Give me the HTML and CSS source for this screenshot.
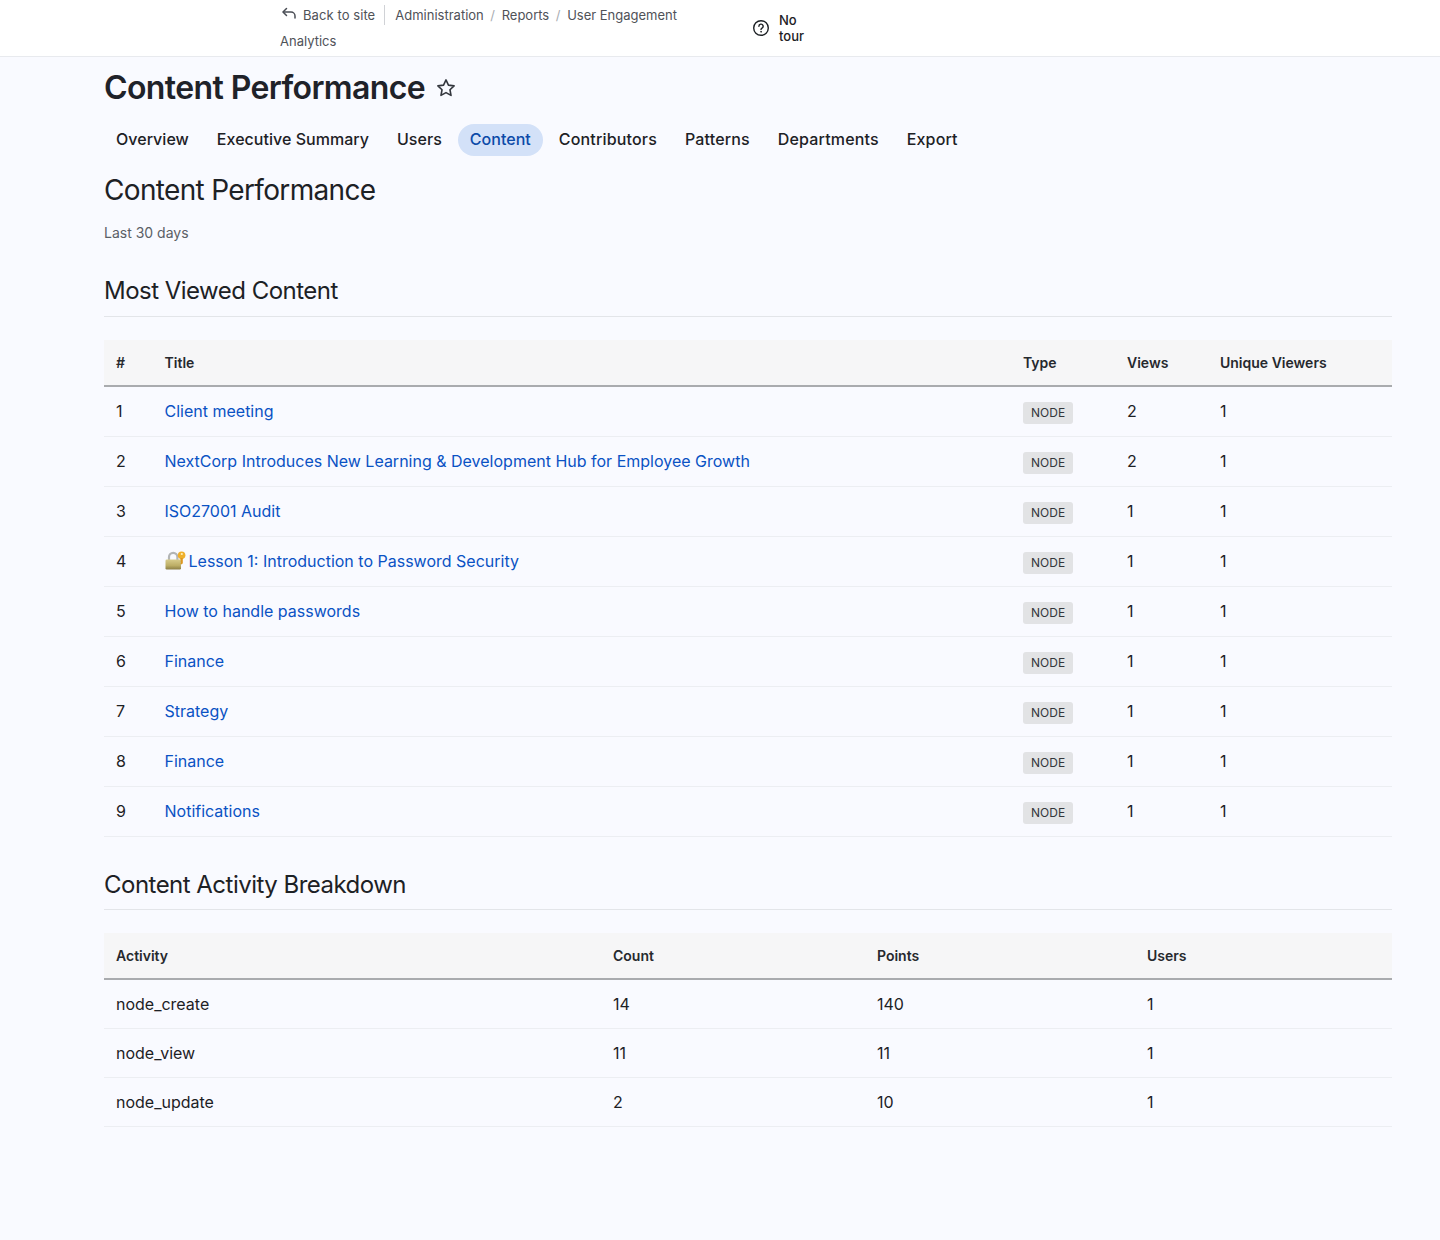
FILE: index.html
```html
<!DOCTYPE html>
<html lang="en">
<head>
<meta charset="utf-8">
<title>Content Performance</title>
<link rel="stylesheet" href="styles.css">
</head>
<body>
<header class="topbar">
  <nav class="crumbs">
    <div class="crumb-line">
      <a class="back"><svg class="back-icon" viewBox="0 0 16 16" width="16" height="16" fill="none" stroke="#4a4d55" stroke-width="1.5" stroke-linecap="round" stroke-linejoin="round"><path d="M5.5 2.5 2 6l3.5 3.5"/><path d="M2.5 6H10a4 4 0 0 1 4 4v2"/></svg>Back to site</a>
      <span class="divider"></span>
      <a>Administration</a><span class="sep">/</span><a>Reports</a><span class="sep">/</span><a>User Engagement</a>
    </div>
    <div class="crumb-line second"><a>Analytics</a></div>
  </nav>
  <div class="tour">
    <svg viewBox="0 0 18 18" width="18" height="18" fill="none" stroke="#1d2125" stroke-width="1.4" stroke-linecap="round"><circle cx="9" cy="9" r="7.3"/><path d="M6.9 7.2a2.1 2.1 0 1 1 3.1 1.9c-.7.4-1 .8-1 1.5"/><circle cx="9" cy="12.8" r=".4" fill="#1d2125" stroke-width=".8"/></svg>
    <span>No<br>tour</span>
  </div>
</header>
<main class="page">
  <div class="title-row">
    <h1>Content Performance</h1>
    <svg class="star" viewBox="0 0 20 20" width="20" height="20" fill="none" stroke="#33363d" stroke-width="1.6" stroke-linejoin="round"><path d="M10 1.9l2.45 5.2 5.65.75-4.13 3.9 1.05 5.6L10 14.6l-5.02 2.75 1.05-5.6L1.9 7.85l5.65-.75z"/></svg>
  </div>
  <nav class="tabs">
    <a>Overview</a><a>Executive Summary</a><a>Users</a><a class="active">Content</a><a>Contributors</a><a>Patterns</a><a>Departments</a><a>Export</a>
  </nav>
  <h2>Content Performance</h2>
  <p class="range">Last 30 days</p>
  <h3>Most Viewed Content</h3>
  <table class="viewed">
    <thead><tr><th class="c1">#</th><th class="c2">Title</th><th class="c3">Type</th><th class="c4">Views</th><th>Unique Viewers</th></tr></thead>
    <tbody>
      <tr><td>1</td><td><a>Client meeting</a></td><td><span class="badge">NODE</span></td><td>2</td><td>1</td></tr>
      <tr><td>2</td><td><a>NextCorp Introduces New Learning &amp; Development Hub for Employee Growth</a></td><td><span class="badge">NODE</span></td><td>2</td><td>1</td></tr>
      <tr><td>3</td><td><a>ISO27001 Audit</a></td><td><span class="badge">NODE</span></td><td>1</td><td>1</td></tr>
      <tr><td>4</td><td><a><svg class="emoji" viewBox="0 0 21 19" width="21" height="19"><defs><linearGradient id="lockbody" x1="0" y1="0" x2="0" y2="1"><stop offset="0" stop-color="#d8cc8c"/><stop offset="0.6" stop-color="#bdae66"/><stop offset="1" stop-color="#8c7f45"/></linearGradient></defs><path d="M4 9V6a4.2 4.2 0 0 1 8.4 0v3" fill="none" stroke="#b3b5b6" stroke-width="2.2"/><rect x="0.5" y="8.5" width="15.5" height="10" rx="1.2" fill="url(#lockbody)"/><circle cx="16.6" cy="4.2" r="3.8" fill="#efb02c"/><circle cx="16.8" cy="3" r="1.1" fill="#fff0bd"/><path d="M15.4 7h2.4v5.2l-1.2 1.4-1.2-1.1.7-.9-.7-.8.7-.8-.7-.7z" fill="#dc9720"/></svg>Lesson 1: Introduction to Password Security</a></td><td><span class="badge">NODE</span></td><td>1</td><td>1</td></tr>
      <tr><td>5</td><td><a>How to handle passwords</a></td><td><span class="badge">NODE</span></td><td>1</td><td>1</td></tr>
      <tr><td>6</td><td><a>Finance</a></td><td><span class="badge">NODE</span></td><td>1</td><td>1</td></tr>
      <tr><td>7</td><td><a>Strategy</a></td><td><span class="badge">NODE</span></td><td>1</td><td>1</td></tr>
      <tr><td>8</td><td><a>Finance</a></td><td><span class="badge">NODE</span></td><td>1</td><td>1</td></tr>
      <tr><td>9</td><td><a>Notifications</a></td><td><span class="badge">NODE</span></td><td>1</td><td>1</td></tr>
    </tbody>
  </table>
  <h3 class="second-heading">Content Activity Breakdown</h3>
  <table class="activity">
    <thead><tr><th class="a1">Activity</th><th class="a2">Count</th><th class="a3">Points</th><th>Users</th></tr></thead>
    <tbody>
      <tr><td>node_create</td><td>14</td><td>140</td><td>1</td></tr>
      <tr><td>node_view</td><td>11</td><td>11</td><td>1</td></tr>
      <tr><td>node_update</td><td>2</td><td>10</td><td>1</td></tr>
    </tbody>
  </table>
</main>
</body>
</html>
```
FILE: styles.css
```css
* { box-sizing: border-box; }
html, body { margin: 0; padding: 0; }
body {
  background: #f9faff;
  color: #1d2125;
  font-family: Inter, "Liberation Sans", sans-serif;
  font-size: 16px;
  min-height: 1240px;
}
a { color: inherit; text-decoration: none; }
.topbar {
  height: 57px;
  background: #fff;
  border-bottom: 1px solid #e8eaee;
  display: flex;
  padding-left: 280px;
}
.crumbs { width: 450px; font-size: 13px; color: #4f5258; }
.crumb-line { display: flex; align-items: center; height: 26px; margin-top: 2px; }
.crumb-line.second { margin-top: 0; }
.back { display: flex; align-items: center; gap: 6px; padding-left: 1px; padding-right: 9px; height: 20px; letter-spacing: 0.08px; }
.back-icon { margin-top: -3px; }
.divider { width: 1px; height: 20px; background: #d0d2d6; margin-right: 10px; }
.sep { color: #a9adb3; margin: 0 6.6px; }
.tour {
  margin-left: 22px;
  margin-top: 12px;
  display: flex;
  align-items: center;
  gap: 9px;
  height: 32px;
  font-size: 13px;
  font-weight: 500;
  line-height: 16px;
}
.page { padding: 0 48px 0 104px; }
.title-row { display: flex; align-items: center; gap: 11px; height: 60px; padding-top: 2px; }
h1 { margin: 0; font-size: 32px; font-weight: 600; letter-spacing: -0.6px; line-height: 58px; color: #1f2229; }
.star { margin-top: -1px; }
.tabs { display: flex; gap: 4px; margin-top: 7px; font-weight: 500; font-size: 16px; letter-spacing: 0.03px; }
.tabs a { height: 32px; line-height: 30px; padding: 0 12px; border-radius: 16px; }
.tabs a:nth-child(n+5) { letter-spacing: 0.16px; }
.tabs a.active { background: #d3e1f8; color: #0b4aa8; }
h2 { margin: 17px 0 0; font-size: 28px; font-weight: 400; letter-spacing: -0.66px; line-height: 34px; color: #1d2125; }
.range { margin: 16px 0 0; font-size: 14px; line-height: 20px; color: #5b5f66; }
h3 {
  margin: 31px 0 0;
  padding-bottom: 9px;
  font-size: 24px;
  font-weight: 400;
  letter-spacing: -0.52px;
  line-height: 33px;
  border-bottom: 1px solid #e3e5e9;
}
table { width: 1288px; border-collapse: collapse; table-layout: fixed; margin-top: 23px; }
th {
  background: #f6f6f7;
  font-size: 14px;
  font-weight: 600;
  text-align: left;
  height: 46px;
  padding: 0 12px;
  border-bottom: 2px solid #a9abae;
  color: #26292e;
}
td { height: 50px; padding: 0 12px; border-bottom: 1px solid #eceef2; }
td a { color: #0a52c4; }
.c1 { width: 48.5px; }
.c2 { width: 858.5px; }
.c3 { width: 104px; }
.c4 { width: 93px; }
.a1 { width: 497px; }
.a2 { width: 264px; }
.a3 { width: 270px; }
.activity td { height: 49px; }
.activity tbody tr:first-child td { height: 50px; }
.emoji { margin-right: 3px; vertical-align: -3px; }
.badge {
  display: inline-block;
  background: #e2e3e5;
  color: #33363b;
  font-size: 12px;
  line-height: 14px;
  padding: 4px 8px;
  border-radius: 3px;
  vertical-align: middle;
  margin-top: 4px;
}
.second-heading { margin-top: 31px; padding-bottom: 8px; }
```
